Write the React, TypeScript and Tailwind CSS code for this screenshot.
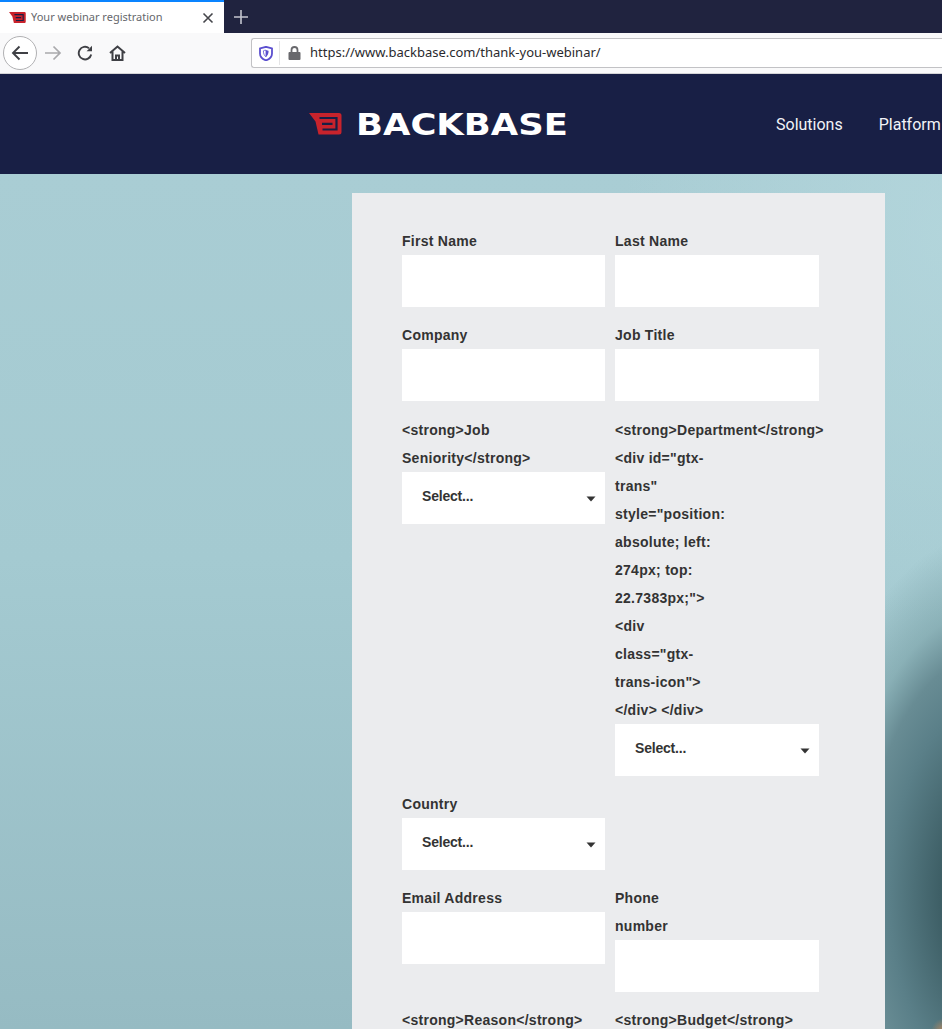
import React from "react";

const Label = ({ lines }: { lines: string[] }) => (
  <div className="whitespace-nowrap text-[14px] font-bold leading-[28px] tracking-[0.27px] text-[#333333]">
    {lines.map((l, i) => (
      <div key={i}>{l}</div>
    ))}
  </div>
);

const TextField = ({ lines }: { lines: string[] }) => (
  <div className="flex flex-col">
    <Label lines={lines} />
    <input type="text" aria-label={lines.join(" ")} className="h-[52px] w-full bg-white outline-none" />
  </div>
);

const SelectField = ({ lines }: { lines: string[] }) => (
  <div className="flex flex-col">
    <Label lines={lines} />
    <div className="flex h-[52px] items-center justify-between bg-white pl-[20px] pr-[9px]">
      <span className="mb-1 text-[14px] font-bold tracking-[-0.2px] text-[#333333]">Select...</span>
      <svg width="10" height="6" viewBox="0 0 10 6" className="mt-[1px]">
        <path d="M0.5 0.5h9L5 5.5z" fill="#333333" />
      </svg>
    </div>
  </div>
);

const Mark = ({ size }: { size: number }) => (
  <svg width={size} height={(size * 22) / 33} viewBox="0 0 33 22" className="shrink-0">
    <path d="M0 0H30Q32.5 0 32.5 2.5V19Q32.5 21.5 30 21.5H9.5L6.5 8.5Z" fill="#c8232c" />
    <path d="M10.5 5H27.5V16.5H13.5M13 10.8H23.5" fill="none" stroke="#181f45" strokeWidth="2.2" />
  </svg>
);

export default function App() {
  return (
    <div className="flex h-[1029px] w-[942px] flex-col overflow-hidden bg-[#181f45] font-['Liberation_Sans',sans-serif]">
      {/* tab strip */}
      <div className="flex h-[33px] shrink-0 items-stretch bg-[#20233f]">
        <div className="flex w-[224px] items-center border-t-2 border-[#0a84ff] bg-white pl-[9px] pr-[10px]">
          <Mark size={17} />
          <span className="ml-[5px] flex-1 font-['Noto_Sans',sans-serif] text-[11px] text-[#66676c]">
            Your webinar registration
          </span>
          <svg width="12" height="12" viewBox="0 0 12 12">
            <path d="M1.5 1.5l9 9M10.5 1.5l-9 9" stroke="#45464b" strokeWidth="1.6" />
          </svg>
        </div>
        <div className="flex w-[34px] items-center justify-center">
          <svg width="14" height="14" viewBox="0 0 14 14">
            <path d="M7 0v14M0 7h14" stroke="#c3c5cf" strokeWidth="1.6" />
          </svg>
        </div>
      </div>

      {/* toolbar */}
      <div className="flex h-[41px] shrink-0 items-center border-b border-[#d4d4d7] bg-[#f9f9fa] pl-[3px]">
        <div className="flex h-[34px] w-[34px] items-center justify-center rounded-full border border-[#b1b1b3] bg-white">
          <svg width="18" height="16" viewBox="0 0 18 16" fill="none" stroke="#3f4045" strokeWidth="1.9">
            <path d="M17 8H2M8.5 1.5L2 8l6.5 6.5" />
          </svg>
        </div>
        <div className="ml-[7px] flex w-[18px] justify-center">
          <svg width="18" height="16" viewBox="0 0 18 16" fill="none" stroke="#a9a9ac" strokeWidth="1.7">
            <path d="M1 8h15M9.5 1.5L16 8l-6.5 6.5" />
          </svg>
        </div>
        <div className="ml-[14px] flex w-[18px] justify-center">
          <svg width="16" height="16" viewBox="0 0 16 16" fill="none" stroke="#3f4045" strokeWidth="1.9">
            <path d="M14.2 9.5A6.3 6.3 0 1 1 12 3.2" />
            <path d="M15 0.8V6.2H9.6z" fill="#3f4045" stroke="none" />
          </svg>
        </div>
        <div className="ml-[14px] flex w-[18px] justify-center">
          <svg width="17" height="16" viewBox="0 0 17 16" fill="none" stroke="#3f4045" strokeWidth="2">
            <path d="M1 8l7.5-6.5L16 8M3.5 6.5V15h10V6.5" />
            <path d="M7 15v-4.5h3V15" />
          </svg>
        </div>
        <div className="ml-[125px] flex h-[30px] min-w-0 flex-1 items-center rounded-l-[3px] border border-r-0 border-[#c2c2c5] bg-white pl-[7px]">
          <svg width="14" height="15" viewBox="0 0 14 15" className="shrink-0">
            <path d="M7 .8L13 2.4V7.5C13 11 10.5 13.2 7 14.4 3.5 13.2 1 11 1 7.5V2.4Z" fill="none" stroke="#5b4fcf" strokeWidth="1.8" />
            <path d="M7 4.2C8 4.2 9.2 4.5 9.6 4.8 9.6 7.8 8.6 9.8 7 10.8Z" fill="#5b4fcf" />
            <path d="M7 4.2C6 4.2 4.8 4.5 4.4 4.8 4.4 7.8 5.4 9.8 7 10.8Z" fill="none" stroke="#5b4fcf" strokeWidth=".8" />
          </svg>
          <div className="ml-[6px] h-[24px] w-px bg-[#e4e4e6]" />
          <svg width="13" height="14" viewBox="0 0 13 14" className="ml-[8px] shrink-0">
            <path d="M3.5 6V4a3 3 0 0 1 6 0v2" fill="none" stroke="#68686c" strokeWidth="1.8" />
            <rect x="0.5" y="6" width="12" height="8" rx="1" fill="#68686c" />
          </svg>
          <span className="ml-[9px] whitespace-nowrap font-['Noto_Sans',sans-serif] text-[13px] text-[#2a2a2e]">
            https://www.backbase.com/thank-you-webinar/
          </span>
        </div>
      </div>

      {/* site nav */}
      <nav className="flex h-[100px] shrink-0 items-center bg-[#181f45] pl-[309px]">
        <Mark size={33} />
        <span className="ml-[14px] mt-px w-[213px] origin-left scale-x-[1.18] whitespace-nowrap font-['DejaVu_Sans',sans-serif] text-[30px] font-bold leading-none text-white">
          BACKBASE
        </span>
        <div className="ml-[207px] mt-px flex gap-[36px] whitespace-nowrap font-['Roboto',sans-serif] text-[16px] text-[#f2f3f7]">
          <span>Solutions</span>
          <span>Platform</span>
        </div>
      </nav>

      {/* hero */}
      <main className="min-h-0 flex-1 bg-[radial-gradient(circle_14px_at_945px_858px,#c08a5c_0%,rgba(192,138,92,0)_100%),radial-gradient(ellipse_200px_380px_at_990px_720px,#3b5c63_0%,#3e5f66_25%,#5a7f88_50%,#688c94_63%,rgba(127,166,172,0.7)_75%,rgba(160,195,202,0)_95%),radial-gradient(ellipse_320px_500px_at_942px_60px,rgba(182,216,222,0.7)_0%,rgba(182,216,222,0)_100%),linear-gradient(180deg,#a9cdd4_0%,#a4cad1_45%,#96bbc3_100%)] pl-[352px] pt-[19px]">
        <div className="w-[533px] bg-[#ebecee] pl-[50px] pt-[34px]">
          <div className="grid grid-cols-[203px_204px] items-start gap-x-[10px] gap-y-[14px]">
            <TextField lines={["First Name"]} />
            <TextField lines={["Last Name"]} />
            <TextField lines={["Company"]} />
            <TextField lines={["Job Title"]} />
            <div className="mt-px">
              <SelectField lines={["<strong>Job", "Seniority</strong>"]} />
            </div>
            <div className="mt-px">
              <SelectField
                lines={[
                  "<strong>Department</strong>",
                  '<div id="gtx-',
                  'trans"',
                  'style="position:',
                  "absolute; left:",
                  "274px; top:",
                  '22.7383px;">',
                  "<div",
                  'class="gtx-',
                  'trans-icon">',
                  "</div> </div>",
                ]}
              />
            </div>
            <SelectField lines={["Country"]} />
            <div />
            <TextField lines={["Email Address"]} />
            <TextField lines={["Phone", "number"]} />
            <Label lines={["<strong>Reason</strong>"]} />
            <Label lines={["<strong>Budget</strong>"]} />
          </div>
        </div>
      </main>
    </div>
  );
}
